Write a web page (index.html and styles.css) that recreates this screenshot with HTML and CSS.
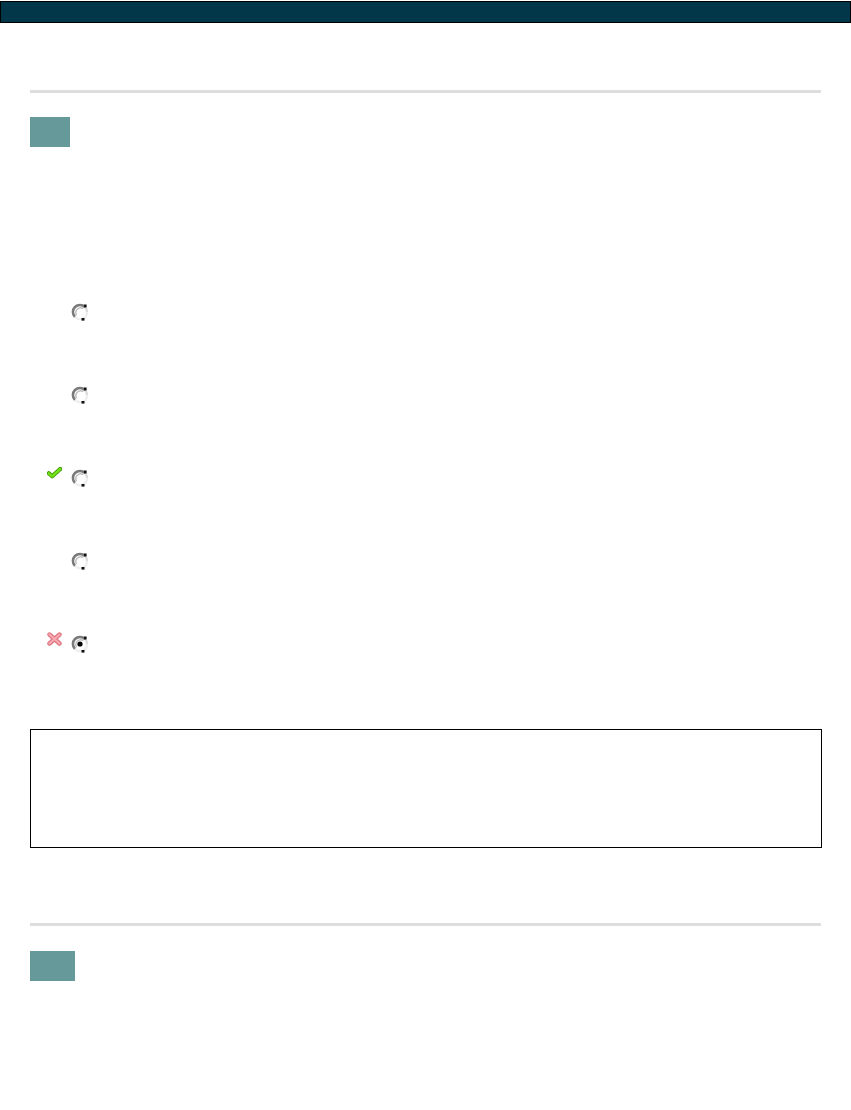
FILE: index.html
```html
<!DOCTYPE html>
<html>
<head>
<meta charset="utf-8">
<link rel="stylesheet" href="styles.css">
</head>
<body>
<div class="topbar"></div>
<main class="page">
  <hr class="rule">
  <div class="tag tag-one"></div>

  <ul class="choices">
    <li class="choice">
      <span class="mark"></span>
      <svg class="radio" viewBox="0 0 18 18" width="18" height="18"><use href="#radio-off"/></svg>
    </li>
    <li class="choice">
      <span class="mark"></span>
      <svg class="radio" viewBox="0 0 18 18" width="18" height="18"><use href="#radio-off"/></svg>
    </li>
    <li class="choice">
      <span class="mark">
        <svg viewBox="0 0 15 12" width="15" height="12"><path d="M1.8 6.3 L5.2 9.3 L13.2 2" fill="none" stroke="#3c9600" stroke-width="4.2" stroke-linejoin="round" stroke-linecap="round"/><path d="M1.8 6.3 L5.2 9.3 L13.2 2" fill="none" stroke="#74e41a" stroke-width="2.4" stroke-linejoin="round" stroke-linecap="round"/></svg>
      </span>
      <svg class="radio" viewBox="0 0 18 18" width="18" height="18"><use href="#radio-off"/></svg>
    </li>
    <li class="choice">
      <span class="mark"></span>
      <svg class="radio" viewBox="0 0 18 18" width="18" height="18"><use href="#radio-off"/></svg>
    </li>
    <li class="choice">
      <span class="mark">
        <svg viewBox="0 0 15 14" width="15" height="14"><path d="M2.5 2.5 L12.5 11.5 M12.5 2.5 L2.5 11.5" fill="none" stroke="#de7580" stroke-width="4.4" stroke-linecap="round"/><path d="M2.5 2.5 L12.5 11.5 M12.5 2.5 L2.5 11.5" fill="none" stroke="#f7aab1" stroke-width="2.2" stroke-linecap="round"/></svg>
      </span>
      <svg class="radio" viewBox="0 0 18 18" width="18" height="18"><use href="#radio-off"/><circle cx="9" cy="9" r="2.6" fill="#000"/></svg>
    </li>
  </ul>

  <div class="answer-box"></div>

  <hr class="rule rule-two">
  <div class="tag tag-two"></div>
</main>

<svg class="defs" width="0" height="0" aria-hidden="true">
  <defs>
    <g id="radio-off">
      <circle cx="9" cy="9" r="7.5" fill="#fff"/>
      <path d="M14 4 A7 7 0 0 0 4 14" fill="none" stroke="#7a7a7a" stroke-width="2.6"/>
      <path d="M12.2 5.6 A4.8 4.8 0 0 0 5.6 12.2" fill="none" stroke="#bdbdbd" stroke-width="1.4"/>
      <path d="M14 4 A7 7 0 0 1 16 9" fill="none" stroke="#dcdcdc" stroke-width="2.4"/>
      <path d="M16 9 A7 7 0 0 1 4 14" fill="none" stroke="#efefef" stroke-width="2.4"/>
      <rect x="13" y="1.5" width="2.6" height="3" fill="#111"/>
      <rect x="10.5" y="15" width="3" height="2.6" fill="#111"/>
    </g>
  </defs>
</svg>
</body>
</html>
```

FILE: styles.css
```css
html, body {
  margin: 0;
  padding: 0;
  background: #ffffff;
  font-family: "Liberation Sans", Arial, sans-serif;
}

.topbar {
  margin-top: 1px;
  width: 849px;
  height: 20px;
  background: #02374a;
  border: 1px solid #000;
}

.page {
  padding: 0 29px 0 30px;
}

.rule {
  margin: 67px 0 0 0;
  width: 791px;
  height: 3px;
  border: 0;
  background: #dddddd;
}

.rule-two {
  margin-top: 75px;
}

.tag {
  height: 30px;
  background: #669999;
}

.tag-one {
  margin-top: 24px;
  width: 40px;
}

.tag-two {
  margin-top: 25px;
  width: 45px;
}

.choices {
  list-style: none;
  margin: 123px 0 0 0;
  padding: 0;
}

.choice {
  height: 83px;
  display: flex;
  align-items: center;
}

.mark {
  width: 15px;
  margin-left: 17px;
  margin-right: 9px;
  display: flex;
  align-items: center;
  justify-content: center;
  position: relative;
  top: -5px;
}

.mark svg {
  display: block;
}

.radio {
  display: block;
}

.answer-box {
  margin-top: 44px;
  width: 790px;
  height: 117px;
  border: 1px solid #000;
}

.defs {
  position: absolute;
  width: 0;
  height: 0;
}
```
